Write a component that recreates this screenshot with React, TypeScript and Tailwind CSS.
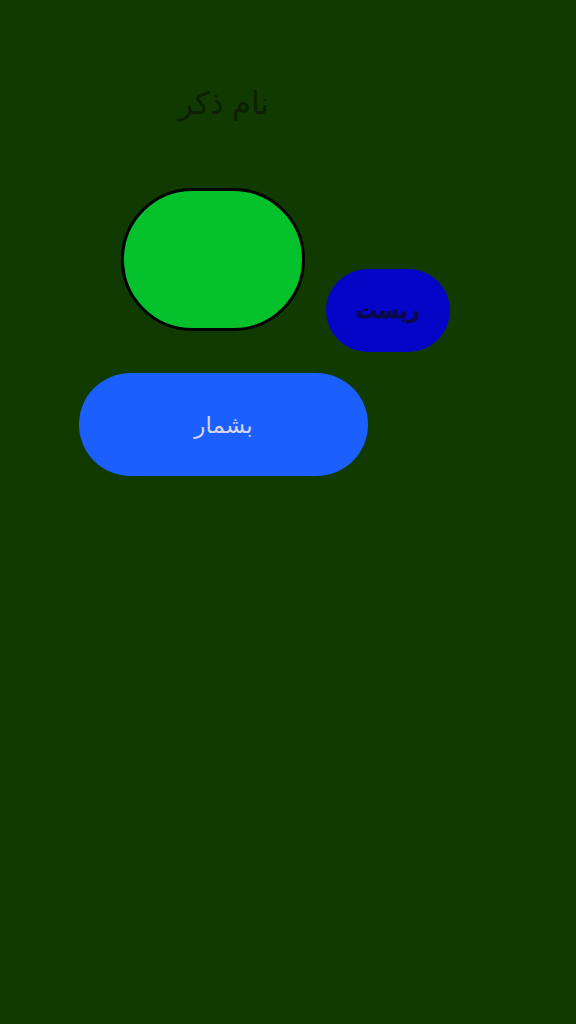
export default function App() {
  return (
    <div
      dir="ltr"
      className="min-h-[1024px] w-full bg-[#113a00] pl-[79px] pt-[80px]"
      style={{ fontFamily: '"Noto Sans", "DejaVu Sans", sans-serif' }}
    >
      <div className="flex w-[289px] flex-col">
        <h1 className="h-[44px] text-center text-[31px] leading-[44px] text-[#0b2005]" dir="rtl">
          نام ذکر
        </h1>

        <div className="mt-[64px] flex items-start">
          <div className="ml-[42px] h-[143px] w-[184px] shrink-0 rounded-full border-[3px] border-black bg-[#04c12c]" />
          <button className="ml-[21px] mt-[81px] h-[83px] w-[124px] shrink-0 rounded-full bg-[#0505c8] text-[21px] font-bold text-[#0a0a4a] [-webkit-text-stroke:0.8px_#0a0a4a]">
            ریست
          </button>
        </div>

        <button className="mt-[21px] h-[103px] w-[289px] rounded-full bg-[#1b5ffe] text-[23px] text-[#d8d2f2]">
          بشمار
        </button>
      </div>
    </div>
  );
}
